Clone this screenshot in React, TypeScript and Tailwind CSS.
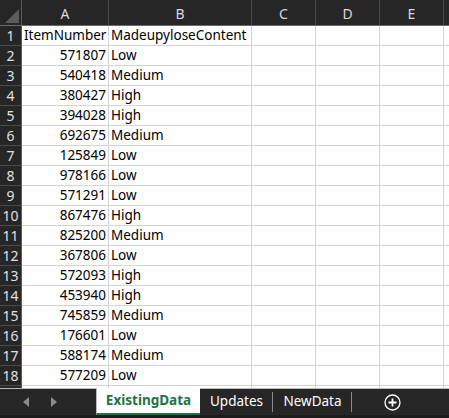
import React from "react";

const rows: [string, string][] = [
  ["571807", "Low"],
  ["540418", "Medium"],
  ["380427", "High"],
  ["394028", "High"],
  ["692675", "Medium"],
  ["125849", "Low"],
  ["978166", "Low"],
  ["571291", "Low"],
  ["867476", "High"],
  ["825200", "Medium"],
  ["367806", "Low"],
  ["572093", "High"],
  ["453940", "High"],
  ["745859", "Medium"],
  ["176601", "Low"],
  ["588174", "Medium"],
  ["577209", "Low"],
];

const font = { fontFamily: '"Noto Sans", "Segoe UI", sans-serif' };

function RowHead({ n }: { n: number }) {
  return (
    <div className="w-[22px] shrink-0 h-full flex items-center justify-center bg-[#262626] text-[#e0e0e0] text-[14px] border-r border-b border-r-[#5a5a5a] border-b-[#4a4a4a]">
      {n}
    </div>
  );
}

function Cell({ w, children, right }: { w: string; children?: React.ReactNode; right?: boolean }) {
  return (
    <div
      className={`${w} shrink-0 h-full border-r border-b border-[#d4d4d4] flex items-center overflow-visible whitespace-nowrap ${
        right ? "justify-end pr-[2px]" : "pl-[2px]"
      }`}
    >
      {children}
    </div>
  );
}

export default function App() {
  return (
    <div className="w-[449px] h-[418px] bg-white overflow-hidden flex flex-col text-[13.5px] leading-none" style={font}>
      {/* column header */}
      <div className="h-[26px] shrink-0 flex bg-[#262626] text-[#d8d8d8] border-b border-[#6a6a6a]">
        <div className="w-[22px] shrink-0 relative border-r border-[#5a5a5a]">
          <svg className="absolute right-[2px] bottom-[2px]" width="14" height="14" viewBox="0 0 14 14">
            <polygon points="14,0 14,14 0,14" fill="#5c5c5c" />
          </svg>
        </div>
        {[
          ["w-[87px]", "A"],
          ["w-[143px]", "B"],
          ["w-[64px]", "C"],
          ["w-[64px]", "D"],
          ["w-[64px]", "E"],
        ].map(([w, l]) => (
          <div key={l} className={`${w} shrink-0 flex items-center justify-center border-r border-[#4a4a4a] text-[14px] pt-[3px]`}>
            {l}
          </div>
        ))}
        <div className="flex-1" />
      </div>

      {/* grid */}
      <div className="flex-1 flex flex-col overflow-hidden text-black">
        <div className="h-[20px] shrink-0 flex">
          <RowHead n={1} />
          <Cell w="w-[87px]">ItemNumber</Cell>
          <Cell w="w-[143px]">MadeupyloseContent</Cell>
          <Cell w="w-[64px]" />
          <Cell w="w-[64px]" />
          <Cell w="w-[64px]" />
          <div className="flex-1 border-b border-[#d4d4d4]" />
        </div>
        {rows.map(([num, lvl], i) => (
          <div key={num} className="h-[20px] shrink-0 flex">
            <RowHead n={i + 2} />
            <Cell w="w-[87px]" right>
              {num}
            </Cell>
            <Cell w="w-[143px]">{lvl}</Cell>
            <Cell w="w-[64px]" />
            <Cell w="w-[64px]" />
            <Cell w="w-[64px]" />
            <div className="flex-1 border-b border-[#d4d4d4]" />
          </div>
        ))}
        <div className="h-[20px] shrink-0 flex">
          <div className="w-[22px] shrink-0 h-full bg-[#262626] border-r border-[#5a5a5a]" />
          <Cell w="w-[87px]" />
          <Cell w="w-[143px]" />
          <Cell w="w-[64px]" />
          <Cell w="w-[64px]" />
          <Cell w="w-[64px]" />
        </div>
      </div>

      {/* sheet tabs */}
      <div className="h-[30px] shrink-0 flex flex-col bg-[#262626]">
        <div className="flex-1 flex items-stretch border-t border-[#b8b8b8] relative">
          <div className="w-[96px] shrink-0 flex items-center">
            <svg className="ml-[23px]" width="6" height="10" viewBox="0 0 6 10">
              <polygon points="6,0 6,10 0,5" fill="#8a8a8a" />
            </svg>
            <svg className="ml-[22px]" width="6" height="10" viewBox="0 0 6 10">
              <polygon points="0,0 0,10 6,5" fill="#8a8a8a" />
            </svg>
          </div>
          <div className="w-[104px] shrink-0 -mt-px bg-white border-l border-[#b8b8b8] border-b-2 border-b-[#217346] flex items-center justify-center font-bold text-[#217346]">
            ExistingData
          </div>
          <div className="w-[73px] shrink-0 flex items-center justify-center text-white relative">
            Updates
            <span className="absolute right-0 top-[3px] bottom-[3px] w-px bg-[#8a8a8a]" />
          </div>
          <div className="w-[79px] shrink-0 flex items-center justify-center text-white relative">
            NewData
            <span className="absolute right-0 top-[3px] bottom-[3px] w-px bg-[#8a8a8a]" />
          </div>
          <div className="w-[80px] shrink-0 flex items-center justify-center">
            <svg width="17" height="17" viewBox="0 0 17 17">
              <circle cx="8.5" cy="8.5" r="7.5" fill="none" stroke="#ffffff" strokeWidth="1.3" />
              <path d="M8.5 4.5v8M4.5 8.5h8" stroke="#ffffff" strokeWidth="1.8" />
            </svg>
          </div>
        </div>
        <div className="h-[3px] shrink-0 bg-[#1c1c1c]" />
      </div>
    </div>
  );
}
